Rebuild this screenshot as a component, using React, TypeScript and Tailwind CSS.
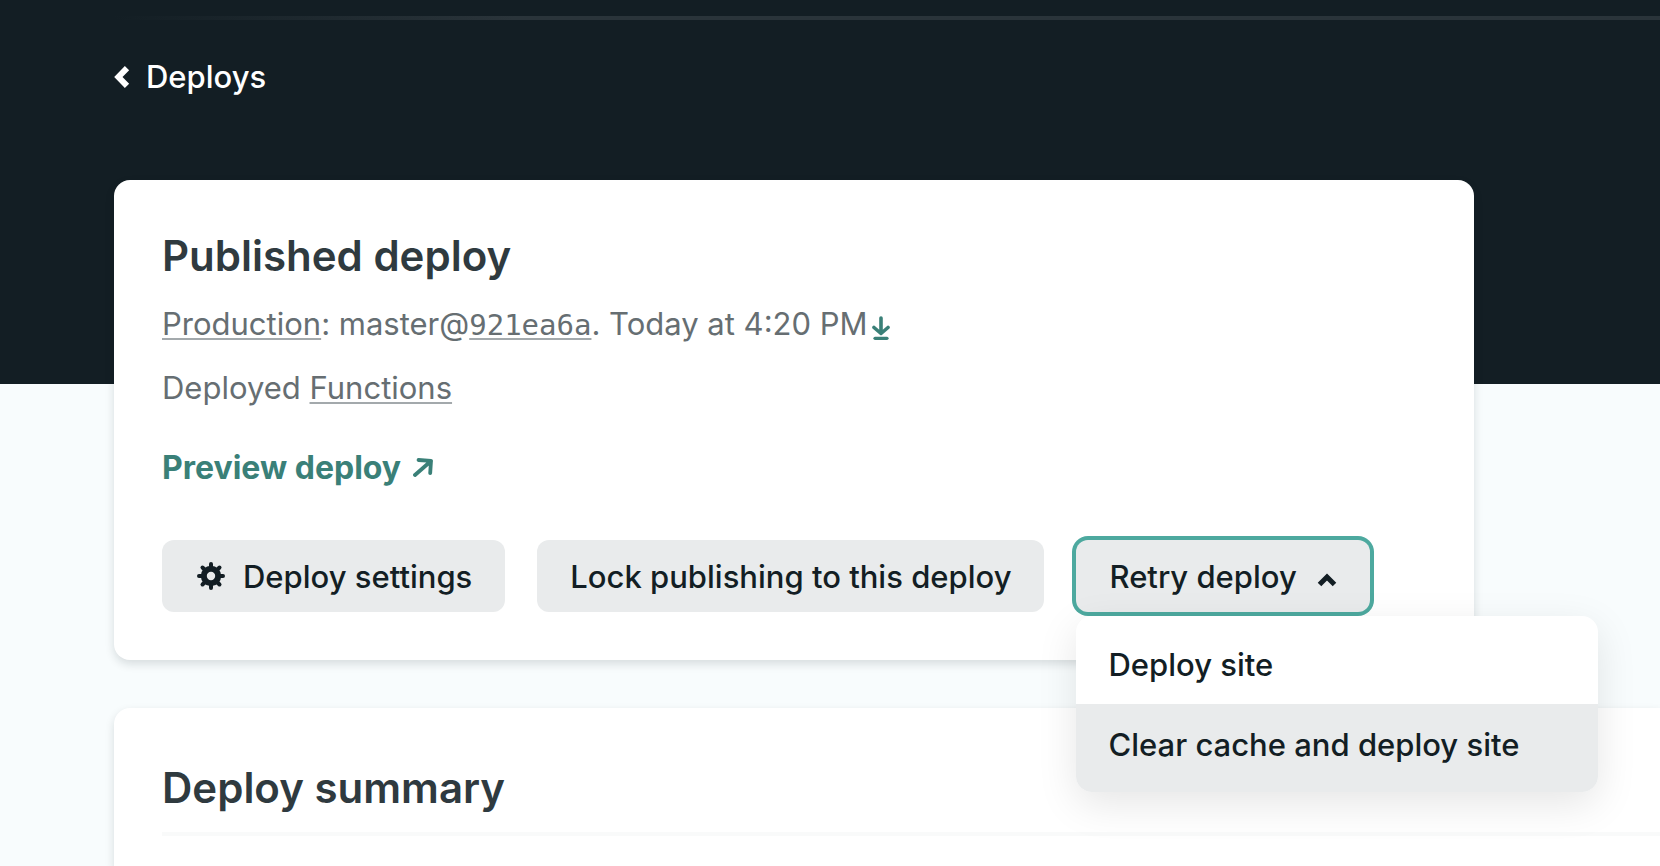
import React from "react";

const linkClass =
  "underline decoration-[#a3a9ac] decoration-2 underline-offset-3 [text-decoration-skip-ink:none]";
const buttonClass =
  "flex h-18 items-center rounded-xl bg-[#e9ebec] px-[33px] pt-0.5 text-[31px] leading-10 font-medium text-[#131e24]";

function GearIcon() {
  return (
    <svg viewBox="-2 -2 32 32" className="mb-0.5 size-8" aria-hidden="true">
      <g stroke="#131e24" strokeWidth="4" strokeLinecap="round">
        <path d="M14 2v5M14 21v5M2 14h5M21 14h5" />
        <path d="M5.5 5.5l3 3M19.5 19.5l3 3M5.5 22.5l3-3M19.5 8.5l3-3" />
      </g>
      <circle cx="14" cy="14" r="7.2" fill="none" stroke="#131e24" strokeWidth="6" />
    </svg>
  );
}

function RetryMenu() {
  return (
    <div className="relative">
      <button
        type="button"
        aria-expanded="true"
        aria-haspopup="menu"
        className={buttonClass + " gap-5 ring-4 ring-[#4da99f]"}
      >
        Retry deploy
        <svg viewBox="0 0 20 14" className="mt-1.5 h-3.5 w-5" fill="none" aria-hidden="true">
          <path d="M2.5 11.5L10 4l7.5 7.5" stroke="#131e24" strokeWidth="5" />
        </svg>
      </button>
      <div
        role="menu"
        className="absolute top-19 left-0 w-[522px] overflow-hidden rounded-2xl bg-white pt-2 text-[31px] leading-[42px] font-medium text-[#131e24] shadow-[0_12px_40px_rgba(0,0,0,0.1)]"
      >
        <button type="button" role="menuitem" className="block w-full px-8 pt-5 pb-[18px] text-left">
          Deploy site
        </button>
        <button type="button" role="menuitem" className="block w-full bg-[#e9ebec] px-8 pt-5 pb-[26px] text-left">
          Clear cache and deploy site
        </button>
      </div>
    </div>
  );
}

export default function App() {
  return (
    <div className="min-h-screen overflow-hidden bg-[#f8fcfd] font-[Inter,sans-serif]">
      <header className="h-96 bg-[#131e24] pt-4 pl-[114px]">
        <div className="h-1 bg-linear-to-r from-[#131e24] to-[#2a343a] to-[400px]" />
        <nav className="pt-[37px]">
          <a href="#deploys" className="inline-flex items-center gap-4 text-[31px] leading-10 font-medium text-white">
            <svg viewBox="0 0 16 22" className="h-[22px] w-4" fill="none" aria-hidden="true">
              <path d="M13 2.2L4.4 11l8.6 8.8" stroke="white" strokeWidth="6" />
            </svg>
            Deploys
          </a>
        </nav>
      </header>

      <main className="-mt-51 pl-[114px]">
        <section className="relative z-10 mr-[186px] rounded-2xl bg-white p-12 shadow-[0_4px_10px_rgba(14,30,37,0.14)]">
          <h1 className="text-[42px] leading-14 font-semibold text-[#2f3a3f]">Published deploy</h1>
          <p className="mt-4 flex text-[31px] leading-12 text-[#666e72]">
            <span>
              <a href="#production" className={linkClass}>Production</a>: master@
              <a href="#commit" className={linkClass + " font-['DejaVu_Sans_Mono',monospace] text-[29px] leading-none"}>921ea6a</a>
              . Today at 4:20 PM
            </span>
            <a href="#download" aria-label="Download deploy" className="ml-1 self-center pt-2">
              <svg viewBox="0 0 18 24" className="h-6 w-[18px]" fill="none" stroke="#3a8078" strokeLinecap="round" strokeLinejoin="round" aria-hidden="true">
                <path d="M9 2v15M2 11.5l7 6 7-6" strokeWidth="3.6" />
                <path d="M3 22.3h12" strokeWidth="3.2" />
              </svg>
            </a>
          </p>
          <p className="mt-4 text-[31px] leading-12 text-[#666e72]">
            Deployed <a href="#functions" className={linkClass}>Functions</a>
          </p>
          <a href="#preview" className="mt-8 flex items-center gap-3 text-[32px] leading-12 font-bold text-[#3a8078]">
            Preview deploy
            <svg viewBox="0 0 20 20" className="size-5" fill="none" stroke="#3a8078" strokeWidth="3.8" strokeLinecap="round" strokeLinejoin="round" aria-hidden="true">
              <path d="M2 17L18 3M5.5 2L18 2.8l-.8 12.4" />
            </svg>
          </a>
          <div className="mt-12 flex gap-8">
            <button type="button" className={buttonClass + " gap-4"}>
              <GearIcon />
              Deploy settings
            </button>
            <button type="button" className={buttonClass}>Lock publishing to this deploy</button>
            <RetryMenu />
          </div>
        </section>

        <section className="mt-12 rounded-tl-2xl bg-white pt-13 pb-8 pl-12 shadow-[0_4px_10px_rgba(14,30,37,0.14)]">
          <h2 className="border-b-4 border-[#f9fafa] pb-4 text-[42px] leading-14 font-semibold text-[#2f3a3f]">
            Deploy summary
          </h2>
        </section>
      </main>
    </div>
  );
}
